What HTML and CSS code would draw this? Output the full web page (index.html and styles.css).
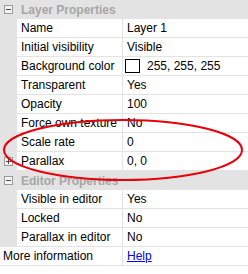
FILE: index.html
```html
<!DOCTYPE html>
<html lang="en">
<head>
    <meta charset="UTF-8">
    <title>Layer Properties</title>
    <link rel="stylesheet" href="styles.css">
</head>
<body>
    <div class="grid">
        <div class="row group">
            <div class="gutter"><span class="box minus"></span></div>
            <div class="grouptitle">Layer Properties</div>
        </div>
        <div class="row">
            <div class="gutter"></div>
            <div class="label">Name</div>
            <div class="value">Layer 1</div>
        </div>
        <div class="row">
            <div class="gutter"></div>
            <div class="label">Initial visibility</div>
            <div class="value">Visible</div>
        </div>
        <div class="row">
            <div class="gutter"></div>
            <div class="label">Background color</div>
            <div class="value"><span class="swatch"></span>255, 255, 255</div>
        </div>
        <div class="row">
            <div class="gutter"></div>
            <div class="label">Transparent</div>
            <div class="value">Yes</div>
        </div>
        <div class="row">
            <div class="gutter"></div>
            <div class="label">Opacity</div>
            <div class="value">100</div>
        </div>
        <div class="row">
            <div class="gutter"></div>
            <div class="label">Force own texture</div>
            <div class="value">No</div>
        </div>
        <div class="row">
            <div class="gutter"></div>
            <div class="label">Scale rate</div>
            <div class="value">0</div>
        </div>
        <div class="row">
            <div class="gutter"><span class="box plus"></span></div>
            <div class="label">Parallax</div>
            <div class="value">0, 0</div>
        </div>
        <div class="row group">
            <div class="gutter"><span class="box minus"></span></div>
            <div class="grouptitle">Editor Properties</div>
        </div>
        <div class="row">
            <div class="gutter"></div>
            <div class="label">Visible in editor</div>
            <div class="value">Yes</div>
        </div>
        <div class="row">
            <div class="gutter"></div>
            <div class="label">Locked</div>
            <div class="value">No</div>
        </div>
        <div class="row">
            <div class="gutter"></div>
            <div class="label">Parallax in editor</div>
            <div class="value">No</div>
        </div>
        <div class="row info">
            <div class="label">More information</div>
            <div class="value"><a href="#">Help</a></div>
        </div>
    </div>

    <!-- the red circle drawn over the screenshot -->
    <svg class="markup" width="248" height="274" viewBox="0 0 248 274">
        <ellipse cx="123" cy="150" rx="119" ry="30" fill="none" stroke="#e8000b" stroke-width="2"/>
    </svg>
</body>
</html>
```

FILE: styles.css
```css
body {
    margin: 0;
    font-family: "Liberation Sans", Arial, sans-serif;
    font-size: 12px;
    color: #000;
    background-color: #fff;
    position: relative;
    width: 248px;
    height: 274px;
    overflow: hidden;
}

.row {
    display: grid;
    grid-template-columns: 17px 106px 1fr;
    height: 19px;
}

.gutter {
    background-color: #e3e3e3;
    display: flex;
    justify-content: center;
    align-items: center;
}

.label,
.value {
    display: flex;
    align-items: center;
    padding-left: 4px;
    border-bottom: 1px solid #e3e3e3;
    white-space: nowrap;
    overflow: hidden;
}

.label {
    border-right: 1px solid #e3e3e3;
}

.group {
    grid-template-columns: 17px 1fr;
    background-color: #e3e3e3;
}

.grouptitle {
    display: flex;
    align-items: center;
    padding-left: 4px;
    font-weight: bold;
    color: #a6a6a6;
}

.info {
    grid-template-columns: 123px 1fr;
}

.info .label {
    padding-left: 3px;
}

.box {
    position: relative;
    width: 7px;
    height: 7px;
    border: 1px solid #9a9a9a;
    background-color: #f4f4f4;
    margin-left: -1px;
}

.box::before {
    content: "";
    position: absolute;
    left: 1px;
    top: 3px;
    width: 5px;
    height: 1px;
    background-color: #4a4a4a;
}

.plus::after {
    content: "";
    position: absolute;
    left: 3px;
    top: 1px;
    width: 1px;
    height: 5px;
    background-color: #4a4a4a;
}

.swatch {
    width: 13px;
    height: 12px;
    border: 1px solid #000;
    background-color: #fff;
    margin-left: -2px;
    margin-right: 7px;
}

a {
    color: #0000ee;
}

.markup {
    position: absolute;
    left: 0;
    top: 0;
    pointer-events: none;
}
```
